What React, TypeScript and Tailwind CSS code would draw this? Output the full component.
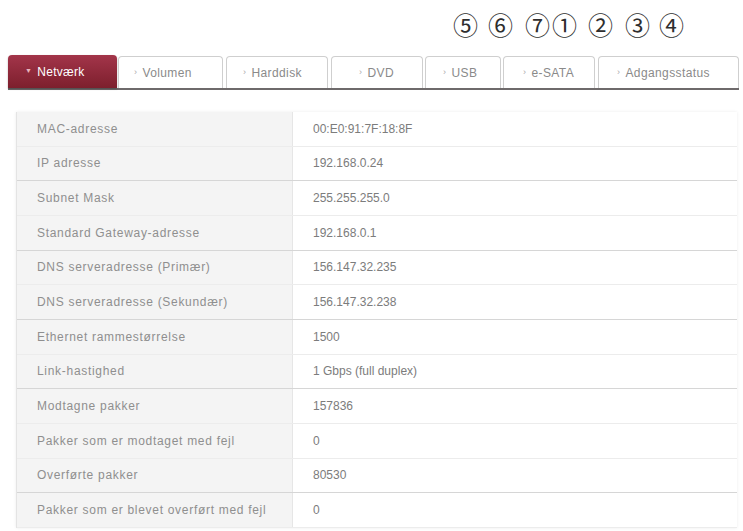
import { ReactNode } from 'react'

interface Tab {
  label: string
  width: string
  pad: string
  active?: boolean
}

const tabs: Tab[] = [
  { label: 'Netværk', width: 'w-[109px]', pad: 'pl-[17px]', active: true },
  { label: 'Volumen', width: 'w-[105px]', pad: 'pl-[15px]' },
  { label: 'Harddisk', width: 'w-[102px]', pad: 'pl-[16px]' },
  { label: 'DVD', width: 'w-[92px]', pad: 'pl-[27px]' },
  { label: 'USB', width: 'w-[76px]', pad: 'pl-[17px]' },
  { label: 'e-SATA', width: 'w-[92px]', pad: 'pl-[19px]' },
  { label: 'Adgangsstatus', width: 'w-[141px]', pad: 'pl-[18px]' },
]

const gaps = ['', 'ml-px', 'ml-[3px]', 'ml-[3px]', 'ml-[2px]', 'ml-[2px]', 'ml-[3px]']

// nummer-markeringer over fanerne
const marks: [string, string][] = [
  ['⑤', 'ml-0'],
  ['⑥', 'ml-[8px]'],
  ['⑦', 'ml-[10px]'],
  ['①', 'ml-0'],
  ['②', 'ml-[9px]'],
  ['③', 'ml-[10px]'],
  ['④', 'ml-[7px]'],
]

// label, value, stærkere skillelinje under rækken
const rows: [string, string, boolean][] = [
  ['MAC-adresse', '00:E0:91:7F:18:8F', false],
  ['IP adresse', '192.168.0.24', true],
  ['Subnet Mask', '255.255.255.0', false],
  ['Standard Gateway-adresse', '192.168.0.1', true],
  ['DNS serveradresse (Primær)', '156.147.32.235', false],
  ['DNS serveradresse (Sekundær)', '156.147.32.238', true],
  ['Ethernet rammestørrelse', '1500', false],
  ['Link-hastighed', '1 Gbps (full duplex)', true],
  ['Modtagne pakker', '157836', false],
  ['Pakker som er modtaget med fejl', '0', false],
  ['Overførte pakker', '80530', true],
  ['Pakker som er blevet overført med fejl', '0', false],
]

function TabButton({ tab, className }: { tab: Tab; className: string }) {
  if (tab.active) {
    return (
      <div
        className={`${tab.width} ${tab.pad} ${className} h-[33px] flex items-center rounded-t-[4px] bg-gradient-to-b from-[#a3354a] to-[#7d1f2d] text-white text-[12px] tracking-[0.3px] shadow-[0_1px_2px_rgba(0,0,0,0.3)]`}
      >
        <span className="text-[7px] mr-[5px] text-[#e8b5bd]">▼</span>
        {tab.label}
      </div>
    )
  }
  return (
    <div
      className={`${tab.width} ${tab.pad} ${className} h-[32px] flex items-center rounded-t-[4px] border border-b-0 border-[#cfcfcf] bg-white text-[#8a8a8a] text-[12px] tracking-[0.4px]`}
    >
      <span className="text-[9px] mr-[5px] text-[#aaa]">›</span>
      {tab.label}
    </div>
  )
}

function Cell({ children, className }: { children: ReactNode; className: string }) {
  return <div className={`flex items-center ${className}`}>{children}</div>
}

export default function App() {
  return (
    <div className="w-[743px] h-[531px] overflow-hidden bg-white font-['Liberation_Sans',Arial,sans-serif]">
      <div className="h-[48px] pl-[452px] pt-[7px] flex items-start text-[25px] leading-[34px] text-[#2e2e2e] font-['Noto_Sans_CJK_JP',sans-serif]">
        {marks.map(([m, ml]) => (
          <span key={m} className={`${ml} w-[27px] text-center`}>
            {m}
          </span>
        ))}
      </div>

      <div className="ml-[8px] w-[731px] flex items-end border-b-2 border-[#6e6a6b] mt-[7px]">
        {tabs.map((t, i) => (
          <TabButton key={t.label} tab={t} className={gaps[i]} />
        ))}
      </div>

      <div className="ml-[16px] mt-[22px] w-[721px] border-l border-[#e4e4e4] shadow-[0_0_3px_rgba(0,0,0,0.08)]">
        {rows.map(([label, value, strong]) => (
          <div
            key={label}
            className={`flex h-[34.66px] border-b ${strong ? 'border-[#d6d6d6]' : 'border-[#ececec]'}`}
          >
            <Cell className="w-[276px] bg-[#f4f4f4] pl-[20px] text-[12px] tracking-[0.7px] text-[#8f8f8f] border-r border-[#e6e6e6]">
              {label}
            </Cell>
            <Cell className="flex-1 pl-[20px] text-[12px] text-[#7c7c7c]">{value}</Cell>
          </div>
        ))}
      </div>
    </div>
  )
}
